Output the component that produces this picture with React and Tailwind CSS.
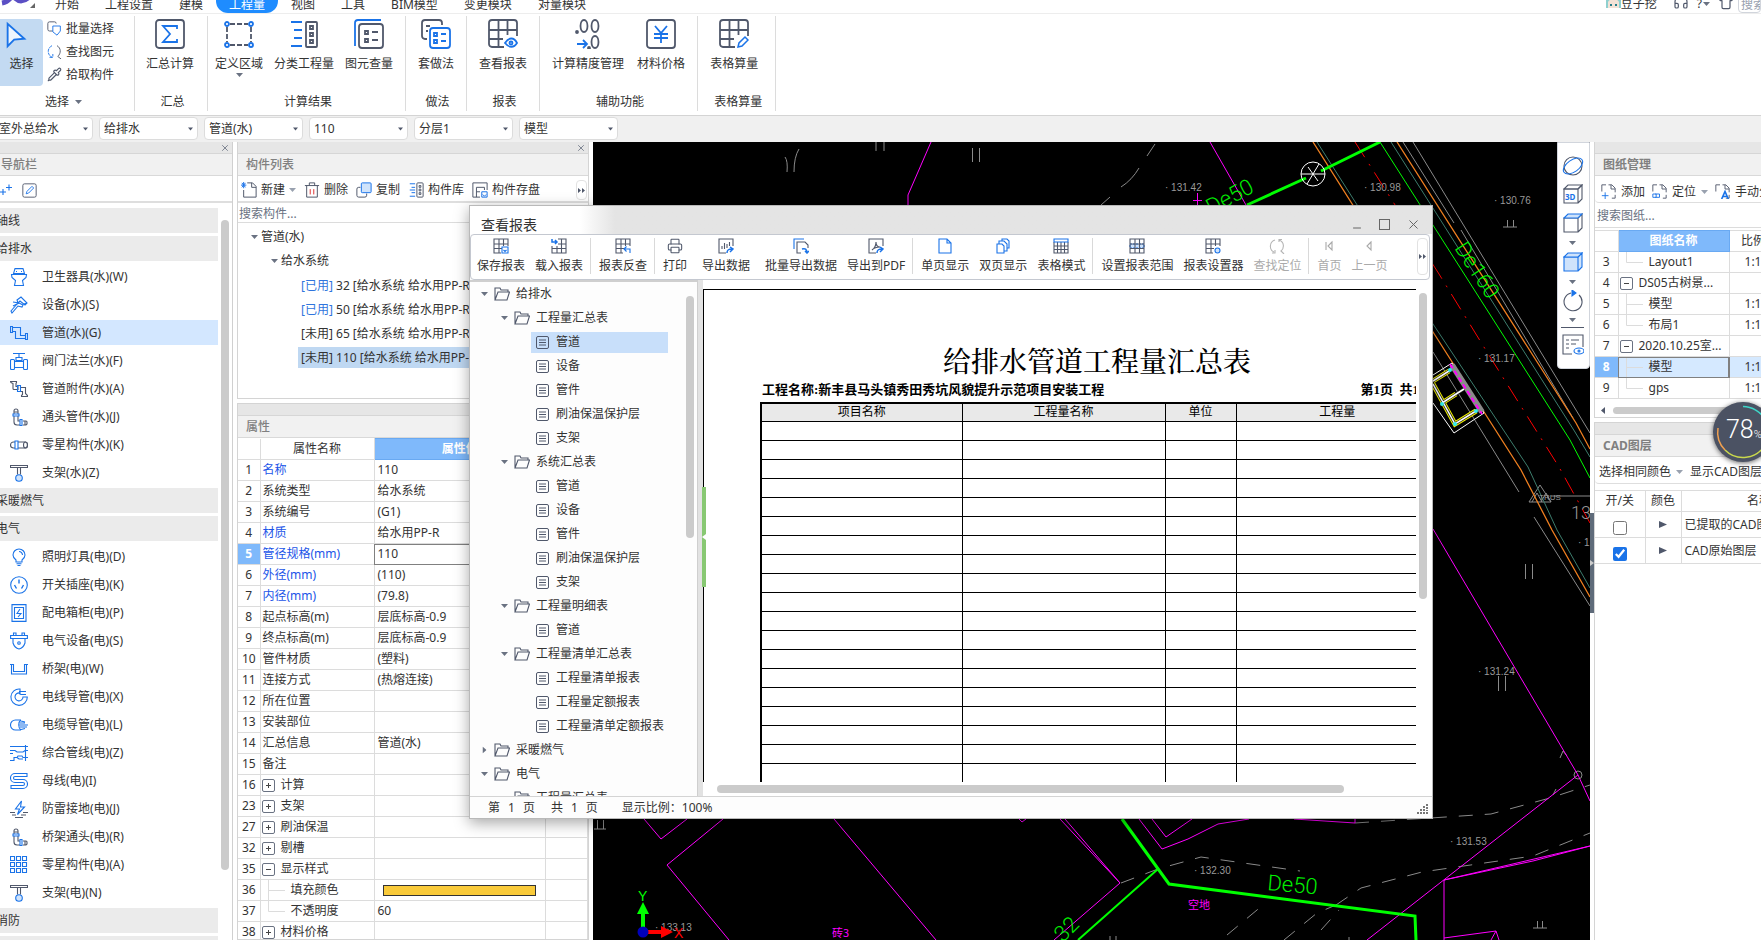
import React from 'react';
import { X, Minus, Printer, Pipette, Headphones, Shirt } from 'lucide-react';

const B = '#1a73e8';
const S = '#50586b';

const Svg = ({ w = 18, h, box = 18, color = B, sw = 1.1, className = '', children }) => (
  <svg
    width={w}
    height={h || w}
    viewBox={`0 0 ${box} ${box}`}
    fill="none"
    stroke={color}
    strokeWidth={sw}
    className={`flex-shrink-0 ${className}`}
    aria-hidden="true"
  >
    {children}
  </svg>
);

const Caret = ({ className = 'text-gray-500' }) => (
  <svg width="7" height="4" viewBox="0 0 7 4" className={`flex-shrink-0 ${className}`} aria-hidden="true">
    <path d="M0 0h7L3.5 4z" fill="currentColor" />
  </svg>
);

/* ---------- navigation icons ---------- */

const Elbow = () => (
  <Svg color={S}>
    <path d="M4 6V3a2 2 0 0 1 4 0v3M4 8v6a3 3 0 0 0 3 3h3M8 8v5h2M13 13h3a1 1 0 0 1 1 1v2l-1 1h-3M4 4h4M15 13v4" />
    <path d="M3 6h6v2H3zM10 11.500h2v6h-2z" stroke={B} />
  </Svg>
);
const Hanger = () => (
  <Svg color={S}>
    <path d="M.5 1.500h17v2H.5zM7.500 3.500v7M10.500 3.500v7" />
    <circle cx="9" cy="14" r="3.300" fill="#cfe3fb" stroke={B} />
  </Svg>
);

const icons = {
  toilet: (
    <Svg>
      <path d="M5 .6h8l1.500 5h-11zM1.500 6.500h15l-.5 3-3.500 3 1 5h-9l1-5-3.500-3z" />
      <path d="M6 3.500h1M11 3.500h1" />
    </Svg>
  ),
  shower: (
    <Svg>
      <path d="M7 4l4-3 6 6-2 2-5-4-2 2zM3 6l6 1 4 2-1 2-4-1-6 7-1-2 6-7" />
      <path d="M3 10l6-3M14 8l3-1" />
    </Svg>
  ),
  pipe: (
    <Svg>
      <path d="M.5 2.500h2v6h-2zM2.500 3.500h8v8h5M2.500 7.500h3v7h10M15.500 9.500h2v6h-2z" />
    </Svg>
  ),
  valve: (
    <Svg>
      <path d="M3 1.500h12M9 2v4M6 5.500h6v3H6z" />
      <rect x=".5" y="7.500" width="4" height="10" rx="1" />
      <rect x="13.500" y="7.500" width="4" height="10" rx="1" />
      <path d="M4.500 9.500h9M4.500 15.500h9" />
    </Svg>
  ),
  fitting: (
    <Svg color={S}>
      <path d="M.5 1.500h6v1l-.5 1v3h2v3H4a1 1 0 0 1-1-1v-5l-2-1zM10.500 7.500h5v6l2 2v1h-6v-1l1-1v-3h-2" />
      <path d="M7.500 5.500h3v6h-3z" stroke={B} />
    </Svg>
  ),
  elbow: <Elbow />,
  misc: (
    <Svg color={S}>
      <path d="M5 6H3.500a3 3 0 0 0 0 6H5M8 6h7.500a2 3 0 0 1 0 6H8" />
      <ellipse cx="15.500" cy="9" rx="2" ry="3" />
      <path d="M5 5h3v8H5z" stroke={B} />
    </Svg>
  ),
  hanger: <Hanger />,
  bulb: (
    <Svg>
      <path d="M6 14v-2C4 10.500 3 9 3 7a6 6 0 0 1 12 0c0 2-1 3.500-3 5v2zM6.500 15.800h5M7.500 17.500h3" />
      <path d="M9 3.500a3.500 3.500 0 0 1 3.500 3.500" />
    </Svg>
  ),
  socket: (
    <Svg>
      <circle cx="9" cy="9" r="8.300" />
      <path d="M9 3.500v4M4.500 9L6.500 12.500M13.500 9l-2 3.500" strokeWidth="1.4" />
    </Svg>
  ),
  box: (
    <Svg>
      <path d="M2 .6h14v16.800H2zM4.500 3.500h9v11h-9z" />
      <path d="M10 5L7 9.500h4L8 13" />
    </Svg>
  ),
  device: (
    <Svg>
      <path d="M.6 3.500h16.800v3H.6zM3.500 3.500V1H6v2.500M12 3.500V1h2.500v2.500M3 6.500V11c1 3 4 5.500 6 6 2-.5 5-3 6-6V6.500" />
      <circle cx="9" cy="11" r="1.300" />
    </Svg>
  ),
  tray: (
    <Svg>
      <path d="M0 4.500h3.500v7h11v-7H18M1.500 4.500v9.500h15V4.500" />
    </Svg>
  ),
  wire: (
    <Svg>
      <path d="M10 1a8.200 8.200 0 1 0 7.300 8H13a4 4 0 1 1-3-4zM9 3.500h7M9 5.500l2 1h5" />
    </Svg>
  ),
  cable: (
    <Svg>
      <path d="M11 4H5.500a5 5 0 0 0 0 10H11M11 4c-3 2-3 8 0 10M10 7h5M9.500 9H18M10 11h7M11 5l4 1M11 13.500l4-1" />
    </Svg>
  ),
  lines: (
    <Svg>
      <path d="M0 2.500h18M0 6.500h5l2 1.500h6l2-1.500h3M0 9.500h3M0 16.500h4v-3h3l1-1.500h4l1 1.500h5M7 13.500l2 1.500h4M15.500 1v16" />
    </Svg>
  ),
  bus: (
    <Svg>
      <path d="M17 1.500H5a4 4 0 0 0 0 9h8a1.500 1.500 0 0 1 0 3H1v3h12a4.500 4.500 0 0 0 0-9H5a1.500 1.500 0 0 1 0-3h12z" />
    </Svg>
  ),
  bolt: (
    <Svg color={S}>
      <path d="M0 12.500h5M13 12.500h5M2 15h4M11 15h5M5 17.500h8" />
      <path d="M11.500 1L5.500 9h4L7.500 14.500 14.500 7h-4z" stroke={B} />
    </Svg>
  ),
  grid: (
    <Svg>
      <path d="M.5.5h4v4h-4zM6.500.5h4v4h-4zM12.500.5h4v4h-4zM.5 6.500h4v4h-4zM6.500 6.500h4v4h-4zM12.500 6.500h4v4h-4zM.5 12.500h4v4h-4zM6.500 12.500h4v4h-4zM12.500 12.500h4v4h-4z" />
    </Svg>
  ),
};

const nav = [
  { head: '轴线' },
  { head: '给排水' },
  { icon: 'toilet', label: '卫生器具(水)(W)' },
  { icon: 'shower', label: '设备(水)(S)' },
  { icon: 'pipe', label: '管道(水)(G)', active: true },
  { icon: 'valve', label: '阀门法兰(水)(F)' },
  { icon: 'fitting', label: '管道附件(水)(A)' },
  { icon: 'elbow', label: '通头管件(水)(J)' },
  { icon: 'misc', label: '零星构件(水)(K)' },
  { icon: 'hanger', label: '支架(水)(Z)' },
  { head: '采暖燃气' },
  { head: '电气' },
  { icon: 'bulb', label: '照明灯具(电)(D)' },
  { icon: 'socket', label: '开关插座(电)(K)' },
  { icon: 'box', label: '配电箱柜(电)(P)' },
  { icon: 'device', label: '电气设备(电)(S)' },
  { icon: 'tray', label: '桥架(电)(W)' },
  { icon: 'wire', label: '电线导管(电)(X)' },
  { icon: 'cable', label: '电缆导管(电)(L)' },
  { icon: 'lines', label: '综合管线(电)(Z)' },
  { icon: 'bus', label: '母线(电)(I)' },
  { icon: 'bolt', label: '防雷接地(电)(J)' },
  { icon: 'elbow', label: '桥架通头(电)(R)' },
  { icon: 'grid', label: '零星构件(电)(A)' },
  { icon: 'hanger', label: '支架(电)(N)' },
  { head: '消防' },
  { head: '' },
];

/* ---------- top ---------- */

const tabs = ['开始', '工程设置', '建模', '工程量', '视图', '工具', 'BIM模型', '变更模块', '对量模块'];

const TopBar = () => (
  <header className="h-[14px] flex-shrink-0 flex items-end border-b border-[#ededed] overflow-hidden">
    <div className="w-[42px] flex-shrink-0">
      <svg width="36" height="14" viewBox="0 0 36 14" aria-hidden="true">
        <path d="M2 4C8 3 10 0 12-3M15-1c4 4 9 4 14-1" stroke="#5b4fc4" strokeWidth="5" fill="none" />
        <path d="M35 4v5h-5z" fill="#666" />
      </svg>
    </div>
    <nav className="flex-1 flex items-end">
      {tabs.map((t) => (
        <button
          key={t}
          className={`h-5 px-[13px] pt-[4px] leading-[16px] rounded-b-[12px] whitespace-nowrap ${
            t === '工程量' ? 'bg-[#1e8cff] text-white' : 'text-[#333]'
          }`}
        >
          {t}
        </button>
      ))}
    </nav>
    <div className="flex items-end h-5 text-[#333]">
      <svg width="15" height="20" viewBox="0 0 15 20" aria-hidden="true">
        <path d="M0 0h15v15H0z" fill="#8fd0cf" />
        <path d="M2 9c2-4 9-4 11 0v6H2z" fill="#f3e2d6" />
        <path d="M4 11h2v2H4zM9 11h2v2H9z" fill="#27808c" />
      </svg>
      <span className="w-[36px] leading-[18px]">豆子挖</span>
      <Headphones className="w-4 h-4 ml-4 mb-[3px] text-[#50586b]" strokeWidth={1.8} />
      <span className="ml-2 flex items-center gap-px leading-[18px]">?<Caret /></span>
      <Shirt className="w-4 h-4 ml-2 mb-[3px] text-[#50586b]" strokeWidth={1.8} />
      <input aria-label="搜索" placeholder="搜索" className="ml-1 w-[23px] h-5 pl-[2px] pt-[2px] border border-gray-300 rounded placeholder:text-gray-400 leading-[18px]" />
    </div>
  </header>
);

const Big = ({ children }) => <Svg w={30} box={30} color={S} sw={1.8}>{children}</Svg>;

const gridPath = 'M16 28H4a3 3 0 0 1-3-3V4a3 3 0 0 1 3-3h22a3 3 0 0 1 3 3v13M1 11h28M1 20h14M10.500 1v27M19.500 1v15';

const groups = [
  { label: '汇总', cls: 'pl-[11px] pr-[13px]', items: [
    ['汇总计算', <Big><rect x="1" y="1" width="28" height="28" rx="3" /><path d="M22 10V7H8l7 8-7 8h14v-3" stroke={B} /></Big>],
  ] },
  { label: '计算结果', cls: 'pl-[7px] pr-3 gap-[11px]', items: [
    ['定义区域', <Big><path d="M6 5h18M6 26h18M3 8v15M27 8v15" strokeDasharray="5 2" /><g stroke={B}><circle cx="3" cy="5" r="2" /><circle cx="27" cy="5" r="2" /><circle cx="3" cy="26" r="2" /><circle cx="27" cy="26" r="2" /></g></Big>, true],
    ['分类工程量', <Big><path d="M2 3h11M5 11h8M5 19h8M2 27h11" stroke={B} /><rect x="17" y="3" width="11" height="25" rx="1" /><path d="M21 7h3v3h-3zM21 14h3v3h-3zM21 21h3v3h-3z" /></Big>],
    ['图元查量', <Big><path d="M1 27V4a3 3 0 0 1 3-3h23" stroke={B} /><rect x="5" y="5" width="24" height="24" rx="3" /><path d="M11 12h3v3h-3zM11 20h3v3h-3zM18 13h6M18 21h6" /></Big>],
  ] },
  { label: '做法', cls: 'px-3', items: [
    ['套做法', <Big><path d="M6 20H4a3 3 0 0 1-3-3V4a3 3 0 0 1 3-3h14a3 3 0 0 1 3 3v2M5 7h4M5 12h2" /><rect x="9" y="9" width="20" height="20" rx="3" stroke={B} /><path d="M13 14h3v3h-3zM13 21h3v3h-3zM20 15h5M20 22h5" stroke={B} /></Big>],
  ] },
  { label: '报表', cls: 'px-3', items: [
    ['查看报表', <Big><path d={gridPath} /><path d="M17 24c4-6 9-6 12 0-3 5-8 5-12 0z" stroke={B} /><circle cx="23" cy="24" r="1.500" stroke={B} /></Big>],
  ] },
  { label: '辅助功能', cls: 'px-3 gap-[13px]', items: [
    ['计算精度管理', <Big><ellipse cx="11" cy="7" rx="3.500" ry="6" /><ellipse cx="22" cy="7" rx="3.500" ry="6" /><ellipse cx="22" cy="23" rx="3.500" ry="6" /><circle cx="4" cy="13" r="1" /><circle cx="16" cy="29" r="1" /><path d="M4 25h10M10 21l4 4-4 4" stroke={B} /></Big>],
    ['材料价格', <Big><rect x="1" y="1" width="28" height="28" rx="3" /><path d="M9 7l6 7 6-7M8 15h14M8 19h14M15 14v10" stroke={B} /></Big>],
  ] },
  { label: '表格算量', cls: 'pl-3 pr-[17px]', items: [
    ['表格算量', <Big><path d={gridPath} /><path d="M19 28l1-4 6-6 3 3-6 6z" stroke={B} strokeWidth="1.500" fill="#fff" /></Big>],
  ] },
];

const Ribbon = () => (
  <section className="h-[102px] flex-shrink-0 flex pt-[2px] border-b border-[#d4d4d4] text-[#333]">
    <div className="w-[134px] h-[95px] flex flex-col flex-shrink-0">
      <div className="flex pt-[3px]">
        <button className="w-[43px] h-[67px] rounded-r bg-[#c3daf2] flex flex-col items-center gap-[7px] pt-[2px]">
          <Svg w={26} h={28} box={28} sw={2} className="mr-3"><path d="M5 2v24l7-7 11-1z" fill="#eef5fd" /></Svg>
          <span className="leading-4">选择</span>
        </button>
        <div className="flex flex-col ml-1 -mt-[2px]">
          <button className="h-[23px] flex items-center gap-1">
            <Svg w={15} color={S}><path d="M7 12H3a2 2 0 0 1-2-2V3a2 2 0 0 1 2-2h6a2 2 0 0 1 2 2" /><path d="M7 6h9v6l-4 5-5-4z" stroke={B} /></Svg>
            批量选择
          </button>
          <button className="h-[23px] flex items-center gap-1">
            <Svg w={15} color={S}><path d="M12 2c5 3 5 9 1 13l4 3" /><path d="M6 2C0 5 0 13 6 16M3 16h4v-4" stroke={B} strokeDasharray="4 1" /></Svg>
            查找图元
          </button>
          <button className="h-[23px] flex items-center gap-1">
            <Pipette className="w-[15px] h-[15px] text-[#50586b]" strokeWidth={1.8} />
            拾取构件
          </button>
        </div>
      </div>
      <div className="mt-auto h-[18px] flex items-center pl-[45px] gap-[6px]">选择<Caret /></div>
    </div>
    {groups.map((g) => (
      <div key={g.label} className="h-[95px] flex flex-col border-l border-[#dcdcdc]">
        <div className={`flex ${g.cls}`}>
          {g.items.map(([label, icon, drop]) => (
            <button key={label} className="flex flex-col items-center pt-[3px] whitespace-nowrap">
              {icon}
              <span className="leading-4 mt-[7px]">{label}</span>
              {drop && <Caret className="mt-px text-gray-500" />}
            </button>
          ))}
        </div>
        <div className="mt-auto h-[18px] leading-[18px] text-center pl-[3px]">{g.label}</div>
      </div>
    ))}
    <div className="border-l border-[#dcdcdc] h-[95px]" />
  </section>
);

const combos = ['室外总给水', '给排水', '管道(水)', '110', '分层1', '模型'];

const Combos = () => (
  <div className="h-[26px] flex-shrink-0 bg-[#f0f0f0] flex gap-[6px] pt-px -ml-[6px]">
    {combos.map((c) => (
      <label key={c} className="relative w-[99px]">
        <select aria-label={c} className="appearance-none w-full h-[23px] pl-1 bg-white border border-[#dcdcdc] rounded text-[#333]">
          <option>{c}</option>
        </select>
        <Caret className="absolute right-[5px] top-[10px] text-[#50586b] w-[5px]" />
      </label>
    ))}
  </div>
);

/* ---------- docks ---------- */

const DockHead = ({ title, indent = 'pl-2', close, bold }) => (
  <>
    <div className="h-3 flex-shrink-0 bg-[#e6e6e6] border-b border-[#d6d6d6] flex items-center justify-end pr-[2px]">
      {close && (
        <button aria-label="关闭"><X className="w-[10px] h-[10px] text-gray-500" /></button>
      )}
    </div>
    <h2 className={`h-[22px] flex-shrink-0 leading-[22px] bg-[#f1f1f1] border-b border-[#d9d9d9] text-[#808080] ${bold ? 'font-bold' : 'font-medium'} ${indent}`}>{title}</h2>
  </>
);

const More = ({ className = 'h-5' }) => (
  <button aria-label="更多" className={`w-[11px] flex-shrink-0 ml-auto border border-[#e2e2e2] rounded flex items-center justify-center ${className}`}>
    <svg width="7" height="5" viewBox="0 0 7 5" aria-hidden="true"><path d="M0 0v5l3-2.500zM4 0v5l3-2.500z" fill={S} /></svg>
  </button>
);

const NavDock = () => (
  <aside className="w-[237px] -ml-1 flex-shrink-0 flex flex-col border-r border-[#d0d0d0] bg-white">
    <DockHead title="导航栏" indent="pl-[5px]" close />
    <div className="h-[27px] flex-shrink-0 flex items-center gap-[10px] pl-1 pt-[3px] border-b-2 border-[#dedede]">
      <button aria-label="添加"><Svg w={12} box={12}><path d="M0 8h6M3 5v6M6 3.500h6M9 .500v6" /></Svg></button>
      <button aria-label="编辑"><Svg w={15} color={S}><rect x="1" y="1" width="16" height="16" rx="2" /><path d="M5 13l1-3 6-6 2 2-6 6z" stroke={B} /></Svg></button>
    </div>
    <div className="flex-1 flex min-h-0 overflow-hidden pt-[5px]">
      <ul className="flex-1 flex flex-col gap-[3px]">
        {nav.map((n, i) =>
          n.icon ? (
            <li key={i}>
              <button className={`w-full h-[25px] pl-[14px] flex items-center gap-[14px] ${n.active ? 'bg-[#d3e7ff]' : ''}`}>
                {icons[n.icon]}
                {n.label}
              </button>
            </li>
          ) : (
            <li key={i} className="h-[25px] flex-shrink-0 leading-[25px] bg-[#ebebeb]">{n.head}</li>
          )
        )}
      </ul>
      <div className="w-[14px] pl-[3px] pt-3">
        <div className="w-2 h-[650px] rounded-full bg-[#cbcbcb]" />
      </div>
    </div>
  </aside>
);

const listTools = [
  ['新建', <Svg w={16} color={S}><path d="M7 1h6l4 4v12H3V9M12 1v5h5" /><path d="M1 1l4 5M5 1L1 6M3 0v7M0 3.500h6" stroke={B} /></Svg>, true],
  ['删除', <Svg w={16} color={S}><path d="M1 4h16M6 4V1h6v3M3 4v13h12V4" /><path d="M7 8v6M11 8v6" stroke="#d33" /></Svg>],
  ['复制', <Svg w={16} color={S}><path d="M5 6H3a2 2 0 0 0-2 2v7a2 2 0 0 0 2 2h7a2 2 0 0 0 2-2v-2" /><rect x="6" y="1" width="11" height="11" rx="1" stroke={B} fill="#cfe3fb" /></Svg>],
  ['构件库', <Svg w={16} color={S}><path d="M2 2h6M2 9h6M2 16h6M4 6h4M4 12h4" stroke={B} /><rect x="10" y="1" width="7" height="16" rx="1" /><path d="M12.500 4h2v2h-2zM12.500 8h2v2h-2zM12.500 12h2v2h-2z" /></Svg>],
  ['构件存盘', <Svg w={16} color={S}><path d="M9 17H1V1h16v8M5 17V6h9v3M5 11h4" /><path d="M11 11h6v6h-6zM12 14l2 2 2-2" stroke={B} /></Svg>],
];

const parts = [
  ['[已用]', ' 32 [给水系统 给水用PP-R 32]', true],
  ['[已用]', ' 50 [给水系统 给水用PP-R 50]', true],
  ['[未用]', ' 65 [给水系统 给水用PP-R 65]'],
  ['[未用]', ' 110 [给水系统 给水用PP-R 110]', false, true],
];

const props = [
  ['1', '名称', '110', 'link'],
  ['2', '系统类型', '给水系统'],
  ['3', '系统编号', '(G1)'],
  ['4', '材质', '给水用PP-R', 'link'],
  ['5', '管径规格(mm)', '110', 'link'],
  ['6', '外径(mm)', '(110)', 'link'],
  ['7', '内径(mm)', '(79.8)', 'link'],
  ['8', '起点标高(m)', '层底标高-0.9'],
  ['9', '终点标高(m)', '层底标高-0.9'],
  ['10', '管件材质', '(塑料)'],
  ['11', '连接方式', '(热熔连接)'],
  ['12', '所在位置', ''],
  ['13', '安装部位', ''],
  ['14', '汇总信息', '管道(水)'],
  ['15', '备注', ''],
  ['16', '计算', '', '+'],
  ['23', '支架', '', '+'],
  ['27', '刷油保温', '', '+'],
  ['32', '剔槽', '', '+'],
  ['35', '显示样式', '', '-'],
  ['36', '填充颜色', '', 'mid'],
  ['37', '不透明度', '60', 'end'],
  ['38', '材料价格', '', '+'],
];

const Toggle = ({ open }) => (
  <button aria-label={open ? '折叠' : '展开'} className="w-[13px] h-[13px] flex-shrink-0 border border-gray-500 rounded-[2px] flex items-center justify-center bg-white">
    <svg width="7" height="7" viewBox="0 0 7 7" aria-hidden="true"><path d={open ? 'M1 3.500h5' : 'M1 3.500h5M3.500 1v5'} stroke="#444" /></svg>
  </button>
);

const Branch = ({ last }) => (
  <svg width="23" height="21" viewBox="0 0 23 21" className="flex-shrink-0" aria-hidden="true">
    <path d={last ? 'M6.500 0v10.500h17' : 'M6.500 0v21M6.500 10.500h17'} stroke="#dcdcdc" fill="none" />
  </svg>
);

const PropName = ({ name, kind }) => {
  if (kind === '+' || kind === '-') {
    return <div className="flex items-center gap-[6px] pl-px"><Toggle open={kind === '-'} />{name}</div>;
  }
  if (kind === 'mid' || kind === 'end') {
    return <div className="flex items-center h-5 pl-px gap-[6px]"><Branch last={kind === 'end'} />{name}</div>;
  }
  return <div className={`pl-[2px] ${kind === 'link' ? 'text-[#1b55e8]' : ''}`}>{name}</div>;
};

const PartDock = () => (
  <aside className="w-[352px] ml-1 flex-shrink-0 flex flex-col bg-white text-[#333]">
    <div className="h-[257px] flex-shrink-0 flex flex-col border border-t-0 border-[#d4d4d4]">
      <DockHead title="构件列表" close />
      <div className="h-[27px] flex-shrink-0 flex items-center gap-2 pl-[3px] pr-px pt-[3px] border-b-2 border-[#dedede]">
        {listTools.map(([label, icon, drop]) => (
          <button key={label} className="flex items-center gap-1 whitespace-nowrap">
            {icon}
            {label}
            {drop && <Caret className="text-gray-400" />}
          </button>
        ))}
        <More />
      </div>
      <input aria-label="搜索构件" placeholder="搜索构件..." className="h-5 flex-shrink-0 pl-px pt-[2px] border-b border-[#dcdcdc] placeholder:text-gray-500 outline-none" />
      <ul className="pt-[2px] leading-6 whitespace-nowrap overflow-hidden">
        <li className="h-6 flex items-center gap-[3px] pl-[13px]"><Caret />管道(水)</li>
        <li className="h-6 flex items-center gap-[3px] pl-[33px]"><Caret />给水系统</li>
        {parts.map(([state, text, used, active]) => (
          <li key={text} className="h-6 flex items-center pl-[60px]">
            <span className={`h-[21px] leading-[21px] flex-1 pl-[3px] whitespace-pre ${active ? 'bg-[#bfd8f2]' : ''}`}>
              <span className={used ? 'text-[#2f74dd]' : ''}>{state}</span>
              {text}
            </span>
          </li>
        ))}
      </ul>
    </div>
    <div className="flex-1 min-h-0 mt-1 flex flex-col border border-[#d4d4d4] overflow-hidden">
      <DockHead title="属性" />
      <table className="w-full table-fixed border-collapse flex-shrink-0">
        <colgroup>
          <col className="w-[22px]" />
          <col className="w-[114px]" />
          <col />
          <col className="w-[42px]" />
        </colgroup>
        <thead>
          <tr className="h-[21px] leading-[18px]">
            <th className="border-b border-[#dcdcdc]" />
            <th className="font-normal border border-t-0 border-[#dcdcdc]">属性名称</th>
            <th className="font-bold bg-[#7fb9fb] text-white border border-[#69a9f2]">属性值</th>
            <th className="font-normal border-b border-[#dcdcdc]" />
          </tr>
        </thead>
        <tbody>
          {props.map(([no, name, value, kind]) => (
            <tr key={no} className="h-[21px] leading-[18px]">
              <td className={`p-0 text-center border border-l-0 border-[#dcdcdc] ${no === '5' ? 'bg-[#7fb9fb] text-white font-bold' : ''}`}>{no}</td>
              <td className="p-0 border border-[#dcdcdc]"><PropName name={name} kind={kind} /></td>
              <td className={`p-0 pl-[3px] border ${no === '5' ? 'border-[#808080] outline outline-[#808080] -outline-offset-1' : 'border-[#dcdcdc]'}`}>
                {no === '36' ? <div className="h-[11px] ml-[5px] mr-[9px] bg-[#f9ca3a] border border-[#333]" /> : value}
              </td>
              <td className="border border-[#dcdcdc]" />
            </tr>
          ))}
        </tbody>
      </table>
    </div>
  </aside>
);

/* ---------- drawing canvas ---------- */

const heights = [
  [1165, 191, '131.42'], [1364, 191, '130.98'], [1494, 204, '130.76'], [1478, 362, '131.17'],
  [1478, 675, '131.24'], [1450, 845, '131.53'], [1194, 874, '132.30'], [655, 931, '133.13'],
];

const Drawing = () => (
  <svg className="absolute inset-0 w-full h-full" viewBox="593 142 997 798" preserveAspectRatio="xMinYMin slice" fill="none" strokeWidth="1" aria-label="平面图">
    <g stroke="#8a8a8a">
      <path d="M1413 142L1590 433M1403 142L1454 223M1461 230L1573 418M1433 352L1519 492M1534 517L1590 606M1551 496h39" />
      <path d="M1155 144l-8 12M1139 168q-7 12-18 19M1110 197l-9 8M785 157q3 4 2 15M799 149q-5 8-5 23M876 142v9M884 142v9M972.500 148v14M979.500 148v14" />
      <path d="M1525.500 564v15M1532.500 564v15M1498.500 676v15M1505.500 676v15M1503 227h14M1507.500 220v7M1513.500 220v7M1533 928h14M1537.500 921v7M1542.500 921v7M594 829h12M597.500 820v9M603.500 820v9" />
      <path d="M1529 502l11-17 11 17zM1532 502l5-9 5 9M1541 502l5-9 5 9" />
      <path d="M1121 883l37-14 43-12 99 14M1355 823l136-9 59-16 40-13M1336 905l25-17 61-16 111-16 57-23M1227 935l36-30M1284 940l33-27 19-8M1321 930l18-20" strokeDasharray="14 12" />
      <circle cx="1578" cy="775" r="4" />
      <path d="M1560 758l3-7 4 5M1553 795l3-6M1110 940v-4M1116 940v-4M1349 940v-3" />
    </g>
    <path d="M1355 142L1439 274L1487 352L1559 467L1590 523" stroke="#f00" strokeDasharray="18 8 2 8" />
    <path d="M1313 142L1433 332L1521 470L1552 530L1590 597M1397 142L1576 423L1590 449" stroke="#f08020" strokeWidth="1.3" />
    <path d="M1317 142L1433 324L1528 467L1557 530L1590 588M1391 142L1575 432L1590 457" stroke="#3d7d6d" />
    <g stroke="#f0f">
      <path d="M931 142L908 195V205M1210 142L1246 205M1197.500 193v14M1193 200.500h9" />
      <path d="M644 819l17 20 26-20M723 819l-56 46 62 75M834 819l102 121M1019 819l3 3 4-3M1060 819l60 64-66 57M1065 819l55 64" />
      <path d="M1139 819l23 30 26-10 30-15 31-5M1152 819l14 18 26-18M1294 819l61 4v-4M1433 529L1578 775L1590 801M1578 775L1367 940M1590 846L1444 880L1533 861L1590 846M1444 880v60M1444 938l52-7 3 9M1496 931l-5 9" />
    </g>
    <g stroke="#0f0">
      <path d="M1380 142L1570 440L1590 478" />
      <path d="M1247 205l59-27M1321 171l59-29M1122 819l47 65 246 32 1 24" strokeWidth="3" />
      <path d="M1158 869l-80 71" strokeWidth="2" />
    </g>
    <g stroke="#fff">
      <circle cx="1313" cy="174" r="12" />
      <path d="M1301 174h24M1307 184l12-20M1308 167l10 14" />
      <path d="M1433 375l19-12 32 50-30 20-21-30" />
    </g>
    <path d="M1452 365l30 47" stroke="#8a8a8a" strokeWidth="6" />
    <path d="M1450 364l32 50" stroke="#f0f" strokeWidth="2" strokeDasharray="5 3" />
    <path d="M1433 381l16-10M1433 384l22 40 21-13M1442 403l14-9" stroke="#ee0" strokeWidth="5" />
    <path d="M1433 381l16-10M1433 384l22 40 21-13M1442 403l22-14" stroke="#222" strokeWidth="3" />
    <path d="M1433 381l16-10M1433 384l22 40 21-13M1442 403l22-14" stroke="#fff" strokeWidth="1.500" />
    <g fill="#3ee">
      <circle cx="1450" cy="370" r="2" /><circle cx="1442" cy="404" r="2" /><circle cx="1455" cy="424" r="2" /><circle cx="1476" cy="411" r="2" />
    </g>
    <g fill="#999" className="font-['Liberation_Sans_Narrow','Liberation_Sans',sans-serif] text-[10px]">
      {heights.map(([x, y, t]) => <text key={t} x={x} y={y}>· {t}</text>)}
      <text x="1539" y="500" className="text-[8px]">TRUS</text>
      <text x="1578" y="546">· 1</text>
    </g>
    <text x="1571" y="519" fill="#999" className="font-['Roboto',sans-serif] text-[18px] font-light">13</text>
    <g fill="#00f000" className="font-['Roboto',sans-serif] text-[22px] font-light">
      <text transform="translate(1211 215) rotate(-28)">De50</text>
      <text transform="translate(1267 890) rotate(5)">De50</text>
      <text transform="translate(1454 248) rotate(57)">De160</text>
      <text transform="translate(1063 943) rotate(-45)">32</text>
    </g>
    <g fill="#f0f" className="font-['Noto_Sans_CJK_SC',sans-serif] text-[11px]">
      <text x="1188" y="909">空地</text>
      <text x="832" y="937">砖3</text>
    </g>
    <path d="M643 932V908" stroke="#0f0" strokeWidth="4" />
    <path d="M637 914l6-12 6 12z" fill="#0f0" />
    <path d="M643 932h20" stroke="#f00" strokeWidth="4" />
    <path d="M661 926l12 6-12 6z" fill="#f00" />
    <circle cx="643" cy="932" r="5.500" fill="#00b" />
    <text x="638" y="901" fill="#0f0" className="font-['Liberation_Sans',sans-serif] text-[14px]">Y</text>
    <text x="674" y="938" fill="#f00" className="font-['Liberation_Sans',sans-serif] text-[14px]">X</text>
  </svg>
);

const Cube = ({ fill = 'none', blueTop, text }) => (
  <Svg w={20} box={20} color={fill === 'none' ? S : B}>
    <path d="M1 5h14v14H1zM15 19l4-4V1l-4 4" fill={fill} />
    <path d="M1 5l4-4h14l-4 4z" stroke={blueTop ? B : undefined} fill={blueTop ? '#cfe3fb' : fill} />
    {text && <text x="2" y="16" fill={B} stroke="none" className="text-[8px] font-bold">{text}</text>}
  </Svg>
);

const ViewTools = () => (
  <div className="absolute right-0 top-0 w-[33px] h-[227px] bg-white border border-gray-300 rounded-b flex flex-col items-center pt-3 pr-[2px] text-[#50586b]">
    <button aria-label="动态观察"><Svg w={22} box={22} color={S}><circle cx="11" cy="11" r="9" /><ellipse cx="11" cy="11" rx="11" ry="6" transform="rotate(-35 11 11)" stroke={B} /></Svg></button>
    <button aria-label="三维" className="mt-[7px]"><Cube text="3D" /></button>
    <button aria-label="俯视" className="mt-[9px] flex flex-col items-center gap-2"><Cube blueTop /><Caret /></button>
    <button aria-label="实体" className="mt-[7px] flex flex-col items-center gap-2"><Cube fill="#cfe3fb" /><Caret /></button>
    <button aria-label="旋转" className="mt-[6px] flex flex-col items-center gap-[6px]">
      <Svg w={22} box={22} color={S}><path d="M9 3a9 9 0 1 0 8 2" /><path d="M10 0l4 3-4 3z" fill={B} stroke={B} /></Svg>
      <Caret />
    </button>
    <div className="w-[23px] border-t border-[#50586b] mt-[5px]" />
    <button aria-label="图层显示" className="mt-[6px]"><Svg w={22} box={22} color={S}><path d="M10 20H1V1h20v12M4 6h3M9 6h8M4 10h3M9 10h5M4 14h3" /><ellipse cx="17" cy="17" rx="5" ry="3" stroke={B} /><circle cx="17" cy="17" r="1" stroke={B} /></Svg></button>
  </div>
);

/* ---------- right docks ---------- */

const sheets = [
  ['3', 'Layout1', '1:1', 'end'],
  ['4', 'DS05古树景...', '', '-'],
  ['5', '模型', '1:1', 'mid'],
  ['6', '布局1', '1:1', 'end'],
  ['7', '2020.10.25室...', '', '-'],
  ['8', '模型', '1:1', 'mid'],
  ['9', 'gps', '1:1', 'end'],
];

const Frame = ({ children }) => (
  <Svg w={15} color={S}><path d="M1 9V1h5M9 1h4l4 4v5M17 13v4h-4M12 1v5h5" />{children}</Svg>
);

const SheetDock = () => (
  <aside className="w-[167px] flex-shrink-0 flex flex-col bg-white text-[#333] whitespace-nowrap overflow-hidden">
    <div className="h-[276px] flex-shrink-0 flex flex-col border-l border-b border-[#d4d4d4]">
      <DockHead title="图纸管理" bold />
      <div className="h-[27px] flex-shrink-0 flex items-center gap-[7px] pl-[6px] pt-[5px] border-b border-[#dedede] rounded-l">
        <button className="flex items-center gap-[5px]"><Frame><path d="M1 14h8M5 10v8" stroke={B} /></Frame>添加</button>
        <button className="flex items-center gap-[5px]"><Frame><path d="M1 12h4v4H1zM4 12h5v4H4" stroke={B} /></Frame>定位<Caret className="text-gray-400" /></button>
        <button className="flex items-center gap-[5px]"><Frame><path d="M8 18l4-9 4 9M9 15h6" stroke={B} strokeWidth="2" /></Frame>手动分割</button>
      </div>
      <input aria-label="搜索图纸" placeholder="搜索图纸..." className="h-[25px] flex-shrink-0 pl-[2px] border-b border-[#dcdcdc] placeholder:text-gray-500 outline-none" />
      <table className="w-[182px] table-fixed border-collapse mt-[2px] flex-shrink-0">
        <colgroup>
          <col className="w-[23px]" />
          <col className="w-[111px]" />
          <col className="w-12" />
        </colgroup>
        <thead>
          <tr className="h-[21px] leading-[18px]">
            <th className="border border-l-0 border-[#dcdcdc]" />
            <th className="font-bold bg-[#7fb9fb] text-white border border-[#69a9f2]">图纸名称</th>
            <th className="font-normal border border-[#dcdcdc]">比例</th>
          </tr>
        </thead>
        <tbody>
          {sheets.map(([no, name, scale, kind]) => (
            <tr key={no} className={`h-[21px] leading-[18px] ${no === '8' ? 'bg-[#d5e9ff]' : ''}`}>
              <td className={`p-0 text-center border border-l-0 border-[#dcdcdc] ${no === '8' ? 'bg-[#7fb9fb] text-white font-bold' : ''}`}>{no}</td>
              <td className={`p-0 border ${no === '8' ? 'border-[#808080] outline outline-[#808080] -outline-offset-1' : 'border-[#dcdcdc]'}`}>
                <PropName name={name} kind={kind} />
              </td>
              <td className="p-0 text-center border border-[#dcdcdc]">{scale}</td>
            </tr>
          ))}
        </tbody>
      </table>
      <div className="flex-1 flex items-center gap-2 pl-[6px] pt-1">
        <svg width="4" height="7" viewBox="0 0 4 7" aria-hidden="true"><path d="M4 0v7L0 3.500z" fill={S} /></svg>
        <div className="flex-1 h-[7px] rounded-l-full bg-[#cbcbcb]" />
      </div>
    </div>
    <div className="mt-1 flex-1 flex flex-col border-l border-t border-[#d4d4d4]">
      <DockHead title="CAD图层" bold />
      <div className="h-[27px] flex-shrink-0 flex items-center gap-[7px] pl-1 pt-[3px] border-b border-[#dedede] rounded-bl">
        <button className="flex items-center gap-[5px]">选择相同颜色<Caret className="text-gray-400" /></button>
        <button>显示CAD图层</button>
      </div>
      <table className="w-[242px] table-fixed border-collapse mt-[6px]">
        <colgroup>
          <col className="w-[50px]" />
          <col className="w-9" />
          <col className="w-[156px]" />
        </colgroup>
        <thead>
          <tr className="h-[21px] leading-[18px]">
            {['开/关', '颜色', '名称'].map((h) => <th key={h} className="font-normal p-0 border border-l-0 border-[#dcdcdc]">{h}</th>)}
          </tr>
        </thead>
        <tbody>
          {['已提取的CAD图层', 'CAD原始图层'].map((name, i) => (
            <tr key={name} className="h-[26px]">
              <td className="p-0 border border-l-0 border-[#dcdcdc]">
                <input type="checkbox" aria-label={name} defaultChecked={i === 1} className="block mx-auto mt-[6px] w-[14px] h-[14px] accent-[#1a73e8]" />
              </td>
              <td className="p-0 border border-[#dcdcdc]">
                <svg width="8" height="7" viewBox="0 0 8 7" className="mx-auto" aria-hidden="true"><path d="M0 0v7l8-3.500z" fill={S} /></svg>
              </td>
              <td className="p-0 pl-[3px] border border-[#dcdcdc]">{name}</td>
            </tr>
          ))}
        </tbody>
      </table>
    </div>
  </aside>
);

/* ---------- report window ---------- */

const mini = 'M8 15H1V1h14v7M1 6h14M1 10.500h8M6 1v14M10.500 1v7';
const MiniGrid = ({ children }) => <Svg w={16} box={16} color={S}><path d={mini} />{children}</Svg>;
const full = 'M1 1h14v14H1zM1 6h14M1 10.500h14M6 1v14M10.500 1v14';

const tools = [
  [
    ['保存报表', <MiniGrid><path d="M9 9h6v6H9zM10.500 12l1.500 1.500L13.500 12" stroke={B} /></MiniGrid>],
    ['载入报表', <Svg w={16} box={16} color={S}><path d="M7 1h8v14H1V8M1 10.500h14M6 8v7M10.500 1v14M7 6h8" /><path d="M1 1v3h5M4 2l2 2-2 2" stroke={B} strokeWidth="1.500" /></Svg>],
  ],
  [['报表反查', <MiniGrid><path d="M15 15v-4H9M11.500 8.500L9 11l2.500 2.500" stroke={B} /></MiniGrid>]],
  [
    ['打印', <Printer className="w-4 h-4 text-[#50586b]" strokeWidth={1.6} />, 'mr-[5px]'],
    ['导出数据', <Svg w={16} box={16} color={S}><path d="M8 15H1V1h14v7M4 8v3M6.500 5v6M9 6v4M11.500 4v4" /><path d="M9 15c0-3 1-4 5-4M12 9l3 2-3 3" stroke={B} strokeWidth="1.500" /></Svg>, 'mr-[5px]'],
    ['批量导出数据', <Svg w={16} box={16} color={S}><path d="M1 11V1h10" stroke={B} /><path d="M8 15H4V4h8l3 3v3" /><path d="M9 11c3-1 5 0 5 4M12 13l2 2 2-2" stroke={B} strokeWidth="1.500" /></Svg>],
    ['导出到PDF', <Svg w={16} box={16} color={S}><path d="M8 15H1V1h14v7M4 12c3-2 4-5 4-8 0 4 2 5 4 5-3 0-6 1-8 3" /><path d="M9 15c0-3 1-4 5-4M12 9l3 2-3 3" stroke={B} strokeWidth="1.500" /></Svg>],
  ],
  [
    ['单页显示', <Svg w={16} box={16}><path d="M2 1h8l4 4v10H2zM10 1v4h4" /></Svg>],
    ['双页显示', <Svg w={16} box={16}><path d="M2 6h5l2 2v7H2zM4 6V3h5l3 3v7H9M7 3V1h5l2 2v7h-2" /></Svg>],
    ['表格模式', <Svg w={16} box={16} color={S}><path d="M1 4v11h14V4M1 8h14M1 11.500h14M4.500 4v11M8 4v11M11.500 4v11" /><path d="M1 1h14v3H1z" stroke={B} /></Svg>],
  ],
  [
    ['设置报表范围', <Svg w={16} box={16} color={S}><path d="M1 6h14v4H1z" fill="#cfe3fb" stroke={B} strokeDasharray="2 1" /><path d={full} /></Svg>],
    ['报表设置器', <MiniGrid><circle cx="12.500" cy="12.500" r="2.500" stroke={B} fill="#cfe3fb" /></MiniGrid>],
    ['查找定位', <Svg w={16} box={16} color="#b5b5b5"><path d="M6 2C0 4 0 12 5 14M3 15h3v-3M10 2c6 2 5 9 2 11l3 3M10 4V1.500h3" /></Svg>, '', true],
  ],
  [
    ['首页', <Svg w={16} box={16} color="#a8a8a8"><path d="M5 4v8M11 4L7 8l4 4z" /></Svg>, '', true],
    ['上一页', <Svg w={16} box={16} color="#a8a8a8"><path d="M10 4L6 8l4 4z" /></Svg>, '', true],
  ],
];

const reports = [
  [0, '给排水'],
  [1, '工程量汇总表'], [2, '管道', 'on'], [2, '设备'], [2, '管件'], [2, '刷油保温保护层'], [2, '支架'],
  [1, '系统汇总表'], [2, '管道'], [2, '设备'], [2, '管件'], [2, '刷油保温保护层'], [2, '支架'],
  [1, '工程量明细表'], [2, '管道'],
  [1, '工程量清单汇总表'], [2, '工程量清单报表'], [2, '工程量定额报表'], [2, '工程量清单定额报表'],
  [0, '采暖燃气', 'closed'], [0, '电气'], [1, '工程量汇总表'],
];

const Folder = () => (
  <Svg w={16} box={16} color={S}><path d="M1 14V2h5l1 2h7v2M1 14L4 6h11.500L13 14z" /></Svg>
);
const Sheet = () => (
  <Svg w={13} box={13} color={S} sw={1}><rect x=".5" y=".5" width="12" height="12" rx="1.500" /><path d="M3 4h7M3 6.500h7M3 9h7" /></Svg>
);

const ReportTree = () => (
  <div className="w-[228px] flex-shrink-0 flex border-t-2 border-r border-[#cfcfcf] overflow-hidden">
    <ul className="flex-1">
      {reports.map(([level, label, state], i) => (
        <li key={i} className="h-6 flex items-center">
          {level === 2 ? (
            <button className={`h-[21px] w-[137px] ml-[61px] pl-[5px] flex items-center gap-[7px] whitespace-nowrap ${state === 'on' ? 'bg-[#c8dffa]' : ''}`}>
              <Sheet />{label}
            </button>
          ) : (
            <button className={`flex items-center gap-[6px] ${level ? 'pl-[31px]' : 'pl-[11px]'}`}>
              <Caret className={state === 'closed' ? '-rotate-90 text-gray-500' : 'text-gray-500'} />
              <Folder />{label}
            </button>
          )}
        </li>
      ))}
    </ul>
    <div className="w-[11px] pt-[14px]">
      <div className="w-2 h-[242px] rounded-full bg-[#cbcbcb]" />
    </div>
  </div>
);

const Report = () => (
  <div className="flex-1 min-w-0 pt-[9px] flex flex-col bg-white">
    <div className="flex-1 min-h-0 flex">
      <div className="flex-1 min-w-0 overflow-hidden border-t border-l border-black text-black">
        <div className="w-[680px] ml-14 pt-[53px]">
          <h1 className="text-[28px] leading-[40px] font-medium text-center pr-[6px] font-['Liberation_Serif','Noto_Serif_CJK_SC','Noto_Sans_CJK_SC',serif]">给排水管道工程量汇总表</h1>
          <div className="flex justify-between h-[19px] leading-[14px] text-[13px] font-bold pl-[2px] font-['Liberation_Serif','Noto_Sans_CJK_SC',serif]">
            <span>工程名称:新丰县马头镇秀田秀坑风貌提升示范项目安装工程</span>
            <span className="pr-2">第1页&nbsp; 共1页</span>
          </div>
          <table className="w-full table-fixed border-collapse border-2 border-b border-black">
            <colgroup>
              <col className="w-[201px]" />
              <col className="w-[203px]" />
              <col className="w-[71px]" />
              <col />
            </colgroup>
            <thead>
              <tr className="h-[18px] leading-[16px] bg-[#e9e9e9]">
                {['项目名称', '工程量名称', '单位', '工程量'].map((h) => <th key={h} className="font-normal p-0 border border-t-2 border-black">{h}</th>)}
              </tr>
            </thead>
            <tbody>
              {Array.from({ length: 19 }, (_, i) => (
                <tr key={i} className="h-[19px]">
                  {[0, 1, 2, 3].map((c) => <td key={c} className="p-0 border border-black" />)}
                </tr>
              ))}
            </tbody>
          </table>
        </div>
      </div>
      <div className="w-4 pl-[3px] pt-1">
        <div className="w-2 h-[306px] rounded-full bg-[#cbcbcb]" />
      </div>
    </div>
    <div className="h-[14px] flex-shrink-0 pt-[3px] pl-[14px]">
      <div className="w-[627px] h-2 rounded-full bg-[#cbcbcb]" />
    </div>
  </div>
);

const ReportWindow = () => (
  <div role="dialog" aria-label="查看报表" className="absolute left-[469px] top-[205px] w-[964px] h-[614px] flex flex-col bg-[#fdfdfd] border border-[#b9b9b9] shadow-[0_4px_14px_rgba(0,0,0,0.35)] text-[#333]">
    <div className="h-[28px] flex-shrink-0 flex items-end bg-linear-to-r from-white from-[110px] to-[#e4e4e4] to-[145px] pl-[11px] pr-[11px]">
      <span className="text-[14px] leading-[18px] flex-1">查看报表</span>
      <div className="flex items-center gap-4 h-5 text-[#666]">
        <button aria-label="最小化"><Minus className="w-3 h-3 mt-2" /></button>
        <button aria-label="最大化" className="w-[11px] h-[11px] border border-[#666]" />
        <button aria-label="关闭"><X className="w-[15px] h-[15px]" strokeWidth={1.6} /></button>
      </div>
    </div>
    <div className="h-[46px] flex-shrink-0 mr-[2px] pt-[3px] flex items-start bg-white border border-[#c4c8d0] rounded pr-px">
      {tools.map((set, i) => (
        <div key={i} className={`h-[36px] flex gap-[10px] pr-[7px] border-[#d9d9d9] ${i ? 'border-l pl-2' : 'pl-[6px]'}`}>
          {set.map(([label, icon, cls = '', off]) => (
            <button key={label} disabled={off} className={`flex flex-col items-center whitespace-nowrap ${cls} ${off ? 'text-[#aaa]' : ''}`}>
              {icon}
              <span className="leading-4 mt-1">{label}</span>
            </button>
          ))}
        </div>
      ))}
      <More className="h-[37px]" />
    </div>
    <div className="flex-1 min-h-0 flex">
      <ReportTree />
      <div className="w-[5px] flex-shrink-0 bg-[#e2e2e2] relative">
        <div className="absolute left-1 top-[207px] w-1 h-[100px] bg-[#88c873] flex items-center">
          <svg width="4" height="6" viewBox="0 0 4 6" aria-hidden="true"><path d="M4 0v6L0 3z" fill="#fff" /></svg>
        </div>
      </div>
      <Report />
    </div>
    <div className="h-[22px] flex-shrink-0 flex items-center border-t border-[#d4d4d4] pl-[18px]">
      <span className="flex gap-2"><span>第</span><span>1</span><span>页</span></span>
      <span className="flex gap-2 ml-4"><span>共</span><span>1</span><span>页</span></span>
      <span className="ml-6">显示比例：100%</span>
      <svg width="12" height="11" viewBox="0 0 12 11" className="ml-auto mr-[3px] mt-1" aria-hidden="true">
        <path d="M0 8h2v2H0zM3 5h2v2H3zM3 8h2v2H3zM6 2h2v2H6zM6 5h2v2H6zM6 8h2v2H6zM9 0h2v2H9zM9 3h2v2H9zM9 6h2v1H9zM9 8h2v2H9z" fill="#777" />
      </svg>
    </div>
  </div>
);

const Gauge = () => (
  <div className="absolute right-[-12px] top-[402px] w-[60px] h-[60px] rounded-full bg-[#4b5263] shadow-[0_1px_5px_rgba(0,0,0,0.6)] text-white">
    <svg className="absolute inset-0" width="60" height="60" viewBox="0 0 60 60" fill="none" strokeWidth="1.500" aria-hidden="true">
      <path d="M30 4.500a25.500 25.500 0 0 1 22 13" stroke="#3ed6c8" />
      <path d="M52 43a25.500 25.500 0 0 1-40 5" stroke="#c9d84c" />
      <path d="M12 48a25.500 25.500 0 0 1-7-22" stroke="#f0a050" />
    </svg>
    <div className="relative pl-[13px] pt-[12px] flex items-baseline leading-[32px] font-['Roboto',sans-serif] font-light">
      <span className="text-[25px]">78</span>
      <span className="text-[11px]">%</span>
    </div>
  </div>
);

export default function App() {
  return (
    <div className="relative h-screen flex flex-col overflow-hidden bg-white text-[12px] leading-4 text-[#333] font-['Noto_Sans','Noto_Sans_CJK_SC',sans-serif]">
      <TopBar />
      <Ribbon />
      <Combos />
      <div className="flex-1 min-h-0 flex">
        <NavDock />
        <PartDock />
        <main className="relative flex-1 min-w-0 ml-1 bg-black">
          <Drawing />
          <ViewTools />
        </main>
        <div className="w-1 flex-shrink-0 pt-[371px]">
          <div className="h-[100px] bg-[#5f6b7a] flex items-center">
            <svg width="4" height="6" viewBox="0 0 4 6" aria-hidden="true"><path d="M0 0v6l4-3z" fill="#ccc" /></svg>
          </div>
        </div>
        <SheetDock />
      </div>
      <ReportWindow />
      <Gauge />
    </div>
  );
}
